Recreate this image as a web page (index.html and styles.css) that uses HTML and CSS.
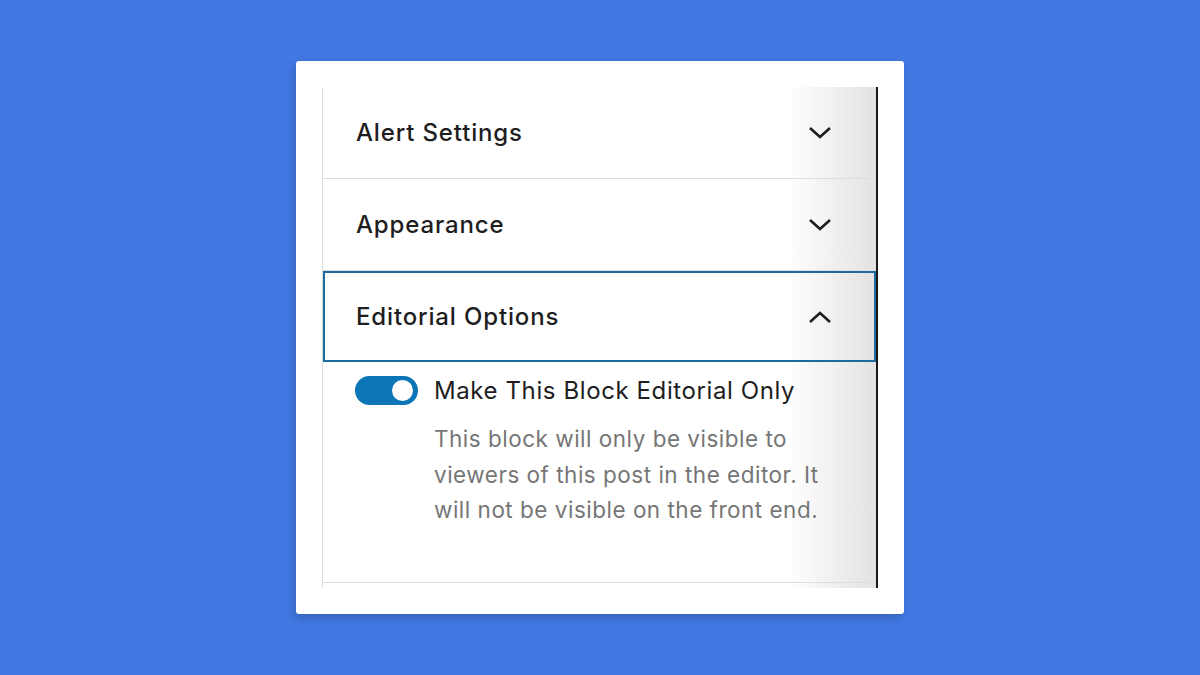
FILE: index.html
```html
<!DOCTYPE html>
<html>
<head>
<meta charset="utf-8">
<link rel="stylesheet" href="styles.css">
</head>
<body>
<div class="card">
  <div class="panel">
    <div class="section">
      <div class="header">
        <span class="title">Alert Settings</span>
        <svg class="chev" width="24" height="14" viewBox="0 0 24 14"><polyline points="2,2 12,11 22,2" fill="none" stroke="#1e1e1e" stroke-width="2.6"/></svg>
      </div>
    </div>
    <div class="section">
      <div class="header">
        <span class="title">Appearance</span>
        <svg class="chev" width="24" height="14" viewBox="0 0 24 14"><polyline points="2,2 12,11 22,2" fill="none" stroke="#1e1e1e" stroke-width="2.6"/></svg>
      </div>
    </div>
    <div class="section open">
      <div class="header focused">
        <span class="title">Editorial Options</span>
        <svg class="chev" width="24" height="14" viewBox="0 0 24 14"><polyline points="2,12 12,3 22,12" fill="none" stroke="#1e1e1e" stroke-width="2.6"/></svg>
      </div>
      <div class="body">
        <div class="toggle-row">
          <span class="toggle"><span class="thumb"></span></span>
          <span class="label">Make This Block Editorial Only</span>
        </div>
        <p class="help">This block will only be visible to<br>viewers of this post in the editor. It<br>will not be visible on the front end.</p>
      </div>
    </div>
  </div>
</div>
</body>
</html>
```
FILE: styles.css
```css
html, body {
  margin: 0;
  height: 100%;
}
body {
  background: #4178e3;
  display: flex;
  align-items: center;
  justify-content: center;
  font-family: Inter, "Liberation Sans", sans-serif;
  color: #1e1e1e;
}
.card {
  width: 608px;
  height: 553px;
  box-sizing: border-box;
  padding: 26px;
  background: #fff;
  border-radius: 3px;
  box-shadow: -2px 4px 10px rgba(0, 0, 0, 0.18);
}
.panel {
  height: 100%;
  box-sizing: border-box;
  border-left: 1px solid #dcdcdc;
  border-right: 2px solid #1a1a1a;
  background: linear-gradient(90deg, #fff 0%, #fff 84%, #e2e2e2 100%);
}
.section {
  border-bottom: 1px solid #dedede;
}
.header {
  height: 91px;
  box-sizing: border-box;
  display: flex;
  align-items: center;
  justify-content: space-between;
  padding: 0 44px 0 33px;
}
.header.focused {
  border: 2px solid #1b6b9c;
  padding-left: 31px;
  padding-right: 42px;
}
.title {
  font-size: 24px;
  font-weight: 500;
  letter-spacing: 0.85px;
}
.chev {
  display: block;
}
.body {
  padding: 13px 0 54px 32px;
}
.toggle-row {
  display: flex;
  align-items: center;
  gap: 16px;
  height: 30px;
}
.toggle {
  width: 63px;
  height: 29px;
  border-radius: 15px;
  background: #0b75b6;
  display: flex;
  align-items: center;
  justify-content: flex-end;
  padding-right: 5px;
  box-sizing: border-box;
}
.thumb {
  width: 21px;
  height: 21px;
  border-radius: 50%;
  background: #fff;
}
.label {
  font-size: 24px;
  letter-spacing: 0.6px;
  color: #1e1e1e;
}
.help {
  margin: 16px 0 0 79px;
  font-size: 22.5px;
  letter-spacing: 0.5px;
  line-height: 35.5px;
  color: #767676;
}
```
